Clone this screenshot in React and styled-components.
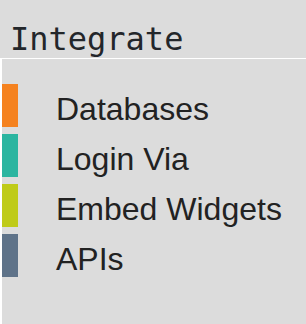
import React from 'react';
import styled, { createGlobalStyle } from 'styled-components';

const panelGrey = '#dcdcdc';

const GlobalStyle = createGlobalStyle`
  html, body {
    margin: 0;
    padding: 0;
    background: #ffffff;
  }
`;

const Page = styled.div`
  width: 306px;
  height: 324px;
  display: flex;
  flex-direction: column;
  gap: 1px;
  overflow: hidden;
`;

const Header = styled.header`
  box-sizing: border-box;
  height: 58px;
  padding: 23px 0 0 10px;
  background: ${panelGrey};
  font-family: "DejaVu Sans Mono", "Liberation Mono", monospace;
  font-size: 32px;
  line-height: 32px;
  color: #23262a;
`;

const Panel = styled.nav`
  flex: 1;
  margin-left: 2px;
  padding-top: 25px;
  background: ${panelGrey};
`;

const List = styled.ul`
  list-style: none;
  margin: 0;
  padding: 0;
`;

const Item = styled.li`
  display: flex;
  align-items: flex-start;
  gap: 38px;
  height: 50px;
`;

const Swatch = styled.span`
  flex: none;
  width: 16px;
  height: 43px;
  background: ${p => p.$color};
`;

const Label = styled.span`
  font-family: "Liberation Sans", Arial, sans-serif;
  font-size: 32px;
  line-height: 50px;
  color: #222222;
`;

const links = [
  { label: 'Databases', color: '#f5821f' },
  { label: 'Login Via', color: '#2bb5a0' },
  { label: 'Embed Widgets', color: '#bfcb19' },
  { label: 'APIs', color: '#5f7389' },
];

export default function App() {
  return (
    <>
      <GlobalStyle />
      <Page>
        <Header>Integrate</Header>
        <Panel>
          <List>
            {links.map(link => (
              <Item key={link.label}>
                <Swatch $color={link.color} />
                <Label>{link.label}</Label>
              </Item>
            ))}
          </List>
        </Panel>
      </Page>
    </>
  );
}
